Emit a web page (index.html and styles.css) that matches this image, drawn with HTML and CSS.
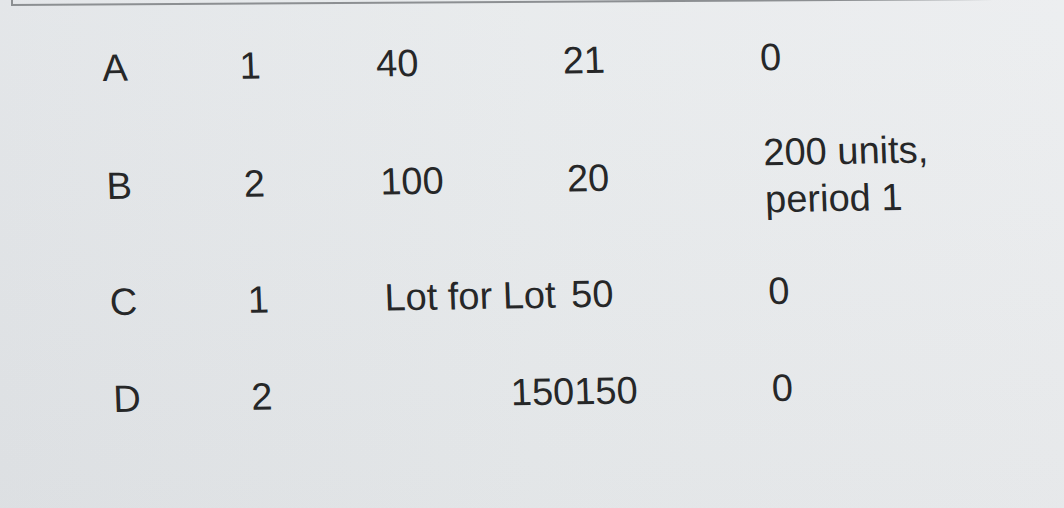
FILE: index.html
```html
<!DOCTYPE html>
<html lang="en">
<head>
<meta charset="utf-8">
<title>Table</title>
<link rel="stylesheet" href="styles.css">
</head>
<body>
<div class="screen">
  <div class="topbox"></div>
  <div class="grid">
    <div class="cell c1">A</div>
    <div class="cell c2">1</div>
    <div class="cell c3">40</div>
    <div class="cell c4">21</div>
    <div class="cell c5">0</div>

    <div class="cell c1">B</div>
    <div class="cell c2">2</div>
    <div class="cell c3">100</div>
    <div class="cell c4">20</div>
    <div class="cell c5 two">200 units,<br>period 1</div>

    <div class="cell c1">C</div>
    <div class="cell c2">1</div>
    <div class="cell c3">Lot for Lot</div>
    <div class="cell c4">50</div>
    <div class="cell c5">0</div>

    <div class="cell c1">D</div>
    <div class="cell c2">2</div>
    <div class="cell c34">150150</div>
    <div class="cell c5">0</div>
  </div>
</div>
</body>
</html>
```

FILE: styles.css
```css
html, body {
  margin: 0;
  padding: 0;
  width: 1064px;
  height: 508px;
  overflow: hidden;
}

body {
  background: linear-gradient(90deg, #e0e3e6 0%, #e6e9eb 50%, #eaecee 100%);
  font-family: "Liberation Sans", Arial, sans-serif;
  color: #262728;
}

.screen {
  width: 1064px;
  height: 508px;
  background: linear-gradient(180deg, rgba(255,255,255,0.12) 0%, rgba(0,0,0,0.015) 100%);
}

.topbox {
  margin-left: 11px;
  width: 990px;
  height: 4px;
  border: 2px solid #8c8f92;
  border-top: none;
  border-right-color: transparent;
  transform: rotate(-0.35deg);
  transform-origin: 0 0;
}

.grid {
  display: grid;
  grid-template-columns: 80px 190px 209px 51px 1fr;
  grid-template-rows: 111px 125px 108px 86px;
  align-items: center;
  padding-left: 81px;
  font-size: 38px;
  line-height: 1.15;
  transform: rotate(-0.95deg) skewX(1.1deg);
  transform-origin: 532px 222px;
}

.cell {
  white-space: nowrap;
}

.c1, .c2 {
  text-align: center;
}

.c3 {
  padding-left: 31px;
}

.c4 {
  text-align: right;
}

.c5 {
  padding-left: 155px;
}

.c5.two {
  line-height: 47px;
}

.c34 {
  grid-column: 3 / 5;
  padding-left: 154px;
}
```
